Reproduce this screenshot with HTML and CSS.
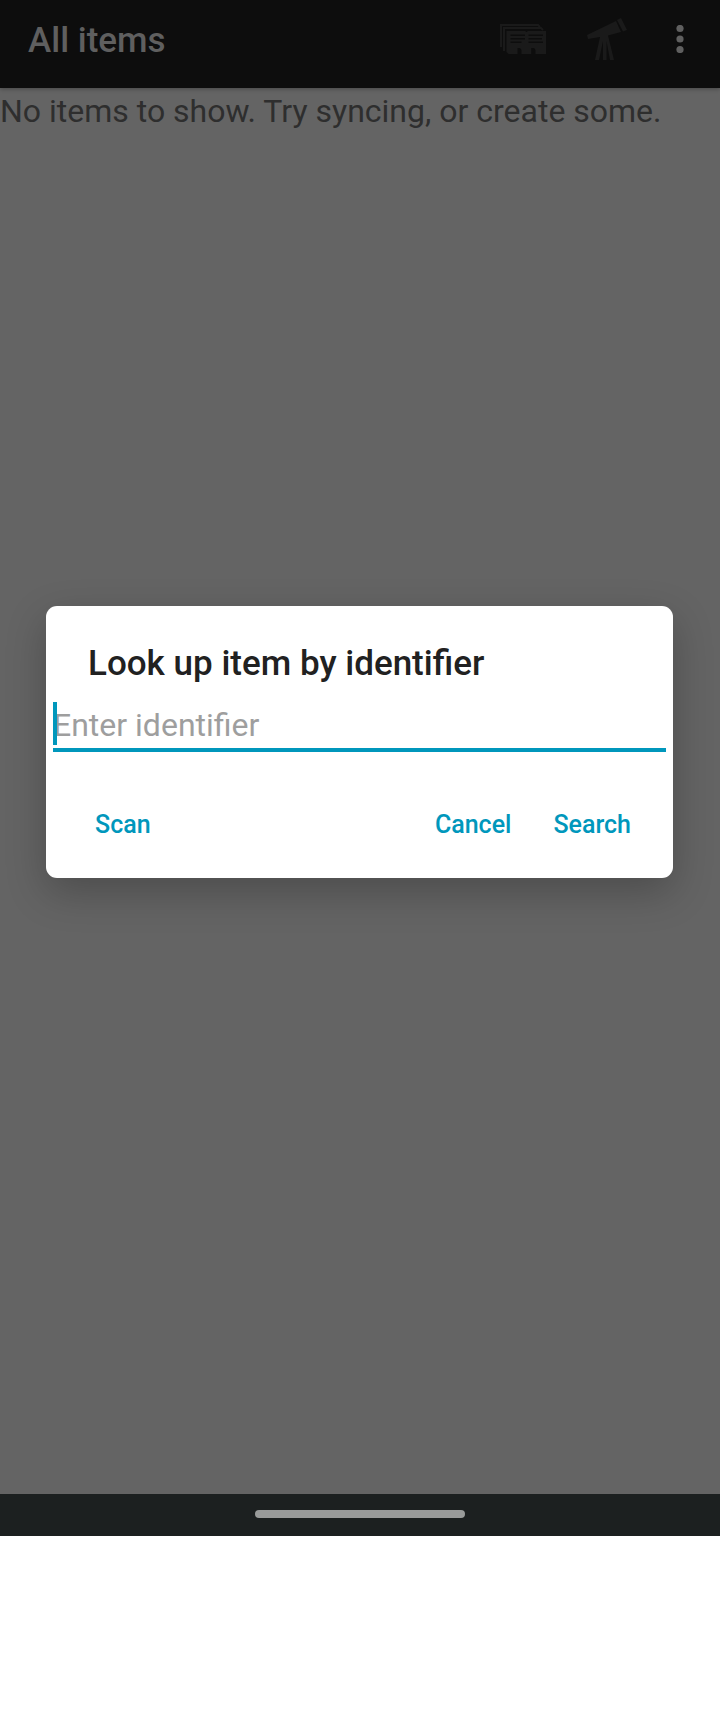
FILE: index.html
```html
<!DOCTYPE html>
<html lang="en">
<head>
<meta charset="utf-8">
<meta name="viewport" content="width=device-width, initial-scale=1">
<title>All items</title>
<link rel="stylesheet" href="styles.css">
</head>
<body>
<div class="device">
  <div class="screen">
    <header class="app-bar">
      <h1 class="app-title">All items</h1>
      <div class="actions">
        <button class="action" type="button" aria-label="Collections">
          <svg width="46" height="30" viewBox="0 0 46 30" aria-hidden="true">
            <path fill="none" stroke="#1a1a1a" stroke-width="2" d="M1 23V1H38L40 3M4 27V4H41L43 6"/>
            <path fill="#1a1a1a" d="M6.500 7H25L26.500 8 28 7H46V30H35V26L33.500 24H31.500V30H21V26L19 24V30H17.500V30H8.500L6.500 28Z"/>
            <path fill="none" stroke="#0d0d0d" stroke-width="1.600" d="M10.500 11.300H25M10.500 14.800H25M10.500 18.300H21.500M28.500 11.300H43M28.500 14.800H42M28.500 18.300H43"/>
            <path fill="#0d0d0d" d="M17.500 24H20L21.500 26V30H17.500ZM31.500 24H34L35.500 26V30H31.500Z"/>
          </svg>
        </button>
        <button class="action" type="button" aria-label="Look up">
          <svg width="42" height="44" viewBox="0 0 42 44" aria-hidden="true">
            <path fill="#1a1a1a" d="M1 18 30 4 35 15 22 18.500 28 43H24L20.500 24V43H17V24L13 43H9L14 20 2 22ZM31 3 35 1 41 13 37 14.500Z"/>
          </svg>
        </button>
        <button class="action action-more" type="button" aria-label="More options">
          <svg width="8" height="28" viewBox="0 0 8 28" aria-hidden="true">
            <g fill="#5f5f5f"><circle cx="4" cy="3.500" r="3.600"/><circle cx="4" cy="14" r="3.600"/><circle cx="4" cy="24.500" r="3.600"/></g>
          </svg>
        </button>
      </div>
    </header>
    <main class="content"><p class="empty">No items to show. Try syncing, or create some.</p></main>
    <div class="overlay">
      <form class="dialog" role="dialog" aria-labelledby="dialog-title">
        <h2 class="dialog-title"><label id="dialog-title" for="identifier">Look up item by identifier</label></h2>
        <div class="field">
          <input class="field-input" id="identifier" type="text" placeholder="Enter identifier">
          <span class="caret"></span>
        </div>
        <div class="buttons">
          <button class="button button-start" type="button">Scan</button>
          <button class="button" type="button">Cancel</button>
          <button class="button" type="submit">Search</button>
        </div>
      </form>
    </div>
  </div>
  <div class="nav-bar"><div class="nav-handle"></div></div>
</div>
</body>
</html>
```
FILE: styles.css
```css
* { box-sizing: border-box; }

body {
  margin: 0;
  background: #fff;
  font-family: Roboto, "Liberation Sans", sans-serif;
}

h1, h2, p { margin: 0; }

button {
  border: 0;
  padding: 0;
  background: none;
  font-family: inherit;
}

.device {
  display: flex;
  flex-direction: column;
  min-height: 100vh;
  padding-bottom: 176px;
}

.screen {
  position: relative;
  display: flex;
  flex: 1;
  flex-direction: column;
  background: #646464;
}

.app-bar {
  display: flex;
  align-items: center;
  justify-content: space-between;
  height: 88px;
  padding: 0 28px 10px;
  background: #0d0d0d;
  box-shadow: 0 1px 4px rgba(0, 0, 0, 0.3);
}

.app-title {
  padding-top: 4px;
  color: #5f5f5f;
  font-size: 35px;
  font-weight: 500;
  line-height: 44px;
}

.actions {
  display: flex;
  align-items: center;
  gap: 40px;
}

.action { display: flex; }

.action-more { padding: 0 8px; }

.empty {
  color: #2e2e2e;
  font-size: 32px;
  line-height: 46px;
}

.overlay {
  position: absolute;
  inset: 0;
  display: flex;
  align-items: center;
  padding: 0 47px 10px 46px;
}

.dialog {
  flex: 1;
  border-radius: 11px;
  background: #fff;
  box-shadow: 0 14px 40px rgba(0, 0, 0, 0.24);
}

.dialog-title {
  padding: 36px 42px 0;
  color: #212121;
  font-size: 35px;
  font-weight: 500;
  line-height: 44px;
}

.field {
  position: relative;
  margin: 8px 7px 0;
}

.field-input {
  display: block;
  width: 100%;
  height: 58px;
  padding: 8px 0 0;
  border: 0;
  border-bottom: 4px solid #0097bc;
  border-radius: 0;
  outline: 0;
  background: none;
  color: #212121;
  font-family: inherit;
  font-size: 32px;
}

.field-input::placeholder { color: #9e9e9e; }

.caret {
  position: absolute;
  top: 8px;
  left: 0;
  width: 4px;
  height: 43px;
  background: #0097bc;
}

.buttons {
  display: flex;
  gap: 10px;
  padding: 35px 26px 17px 33px;
}

.button {
  height: 74px;
  padding: 0 16px;
  color: #0097bc;
  font-size: 25px;
  font-weight: 500;
}

.button-start { margin-right: auto; }

.nav-bar {
  display: flex;
  justify-content: center;
  height: 42px;
  padding-top: 16px;
  background: #1c2020;
}

.nav-handle {
  width: 210px;
  height: 8px;
  border-radius: 4px;
  background: #999b9a;
}
```
